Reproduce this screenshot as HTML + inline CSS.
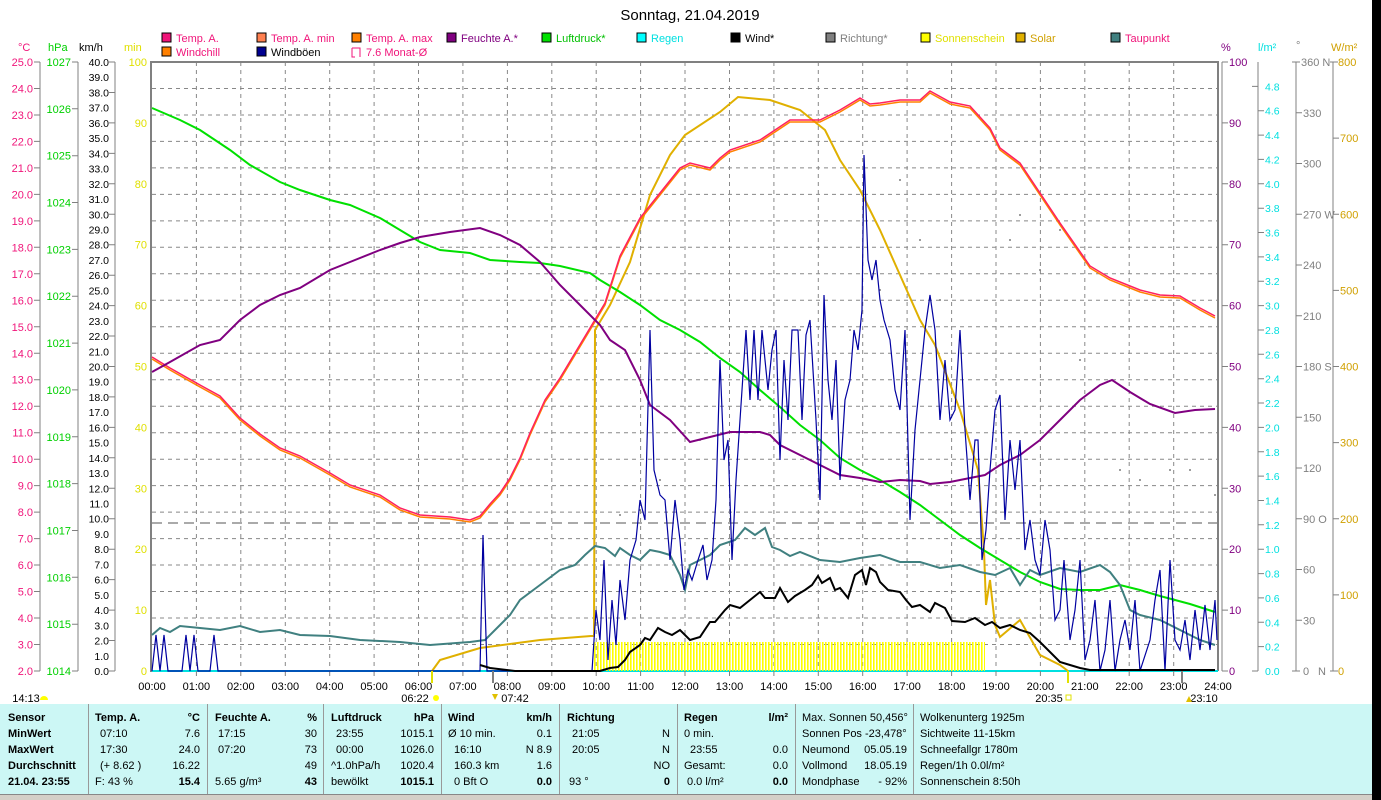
<!DOCTYPE html><html><head><meta charset="utf-8"><style>
body{margin:0;background:#fff;width:1381px;height:800px;overflow:hidden}
svg{display:block;font-family:"Liberation Sans",sans-serif;font-size:11px}
</style></head><body>
<svg width="1381" height="800" viewBox="0 0 1381 800">
<rect x="1372" y="0" width="9" height="800" fill="#000"/>
<text x="690" y="20" font-size="15" text-anchor="middle">Sonntag, 21.04.2019</text>
<!-- legend -->
<g font-size="11">
<rect x="162" y="33" width="9" height="9" fill="#f0157a" stroke="#000"/><text x="176" y="42" fill="#f0157a">Temp. A.</text>
<rect x="257" y="33" width="9" height="9" fill="#ff8050" stroke="#000"/><text x="271" y="42" fill="#f0157a">Temp. A. min</text>
<rect x="352" y="33" width="9" height="9" fill="#ff8000" stroke="#000"/><text x="366" y="42" fill="#f0157a">Temp. A. max</text>
<rect x="447" y="33" width="9" height="9" fill="#800080" stroke="#000"/><text x="461" y="42" fill="#800080">Feuchte A.*</text>
<rect x="542" y="33" width="9" height="9" fill="#00e000" stroke="#000"/><text x="556" y="42" fill="#00c000">Luftdruck*</text>
<rect x="637" y="33" width="9" height="9" fill="#00ffff" stroke="#000"/><text x="651" y="42" fill="#00e0e0">Regen</text>
<rect x="731" y="33" width="9" height="9" fill="#000" stroke="#000"/><text x="745" y="42">Wind*</text>
<rect x="826" y="33" width="9" height="9" fill="#808080" stroke="#000"/><text x="840" y="42" fill="#808080">Richtung*</text>
<rect x="921" y="33" width="9" height="9" fill="#ffff00" stroke="#000"/><text x="935" y="42" fill="#e0e000">Sonnenschein</text>
<rect x="1016" y="33" width="9" height="9" fill="#e0b000" stroke="#000"/><text x="1030" y="42" fill="#d0a000">Solar</text>
<rect x="1111" y="33" width="9" height="9" fill="#408080" stroke="#000"/><text x="1125" y="42" fill="#f0157a">Taupunkt</text>
<rect x="162" y="47" width="9" height="9" fill="#ff8000" stroke="#000"/><text x="176" y="56" fill="#f0157a">Windchill</text>
<rect x="257" y="47" width="9" height="9" fill="#000090" stroke="#000"/><text x="271" y="56">Windböen</text>
<path d="M352 48h8v9M352 48v9h3" fill="none" stroke="#f0157a"/><text x="366" y="56" fill="#f0157a">7.6 Monat-Ø</text>
</g>
<!-- axis headers -->
<g font-size="11">
<text x="18" y="51" fill="#f0157a">°C</text><text x="48" y="51" fill="#00d000">hPa</text><text x="79" y="51">km/h</text><text x="124" y="51" fill="#e0e000">min</text>
<text x="1221" y="51" fill="#800080">%</text><text x="1258" y="51" fill="#00e0e0">l/m²</text><text x="1296" y="49" fill="#808080">°</text><text x="1331" y="51" fill="#d0a000">W/m²</text>
</g>
<!-- grid -->
<g stroke="#888" stroke-dasharray="4,4" stroke-width="1">
<path d="M152 88.5H1218M152 115H1218M152 141.4H1218M152 167.9H1218M152 194.4H1218M152 220.9H1218M152 247.3H1218M152 273.8H1218M152 300.3H1218M152 326.8H1218M152 353.3H1218M152 379.7H1218M152 406.2H1218M152 432.7H1218M152 459.2H1218M152 485.6H1218M152 512.1H1218M152 538.6H1218M152 565H1218M152 591.5H1218M152 618H1218M152 644.5H1218"/>
<path d="M196.4 62V671M240.8 62V671M285.3 62V671M329.7 62V671M374.1 62V671M418.5 62V671M462.9 62V671M507.4 62V671M551.8 62V671M596.2 62V671M640.6 62V671M685 62V671M729.5 62V671M773.9 62V671M818.3 62V671M862.7 62V671M907.1 62V671M951.6 62V671M996 62V671M1040.4 62V671M1084.8 62V671M1129.2 62V671M1173.7 62V671"/>
</g>
<path d="M152 523H1218" stroke="#555" stroke-dasharray="10,6"/>
<!-- frame -->
<path d="M151 62H1219M151 61V672M1218 62V671" stroke="#808080" stroke-width="2" fill="none"/>
<path d="M1222 62V671" stroke="#808080" stroke-width="1"/>
<path d="M152 671H1218" stroke="#00e0e0" stroke-width="2"/>
<!-- left axis lines -->
<g stroke="#808080" fill="none">
<path d="M40 62V671M78 62V671M115 62V671"/>
<path d="M34 62h6M34 88.5h6M34 115h6M34 141.4h6M34 167.9h6M34 194.4h6M34 220.9h6M34 247.3h6M34 273.8h6M34 300.3h6M34 326.8h6M34 353.3h6M34 379.7h6M34 406.2h6M34 432.7h6M34 459.2h6M34 485.6h6M34 512.1h6M34 538.6h6M34 565h6M34 591.5h6M34 618h6M34 644.5h6M34 671h6"/>
<path d="M72 62h6M72 108.8h6M72 155.7h6M72 202.5h6M72 249.4h6M72 296.2h6M72 343.1h6M72 389.9h6M72 436.8h6M72 483.6h6M72 530.5h6M72 577.3h6M72 624.2h6M72 671h6"/>
<path d="M109 62h6M109 92.5h6M109 122.9h6M109 153.4h6M109 183.8h6M109 214.3h6M109 244.7h6M109 275.2h6M109 305.6h6M109 336h6M109 366.5h6M109 396.9h6M109 427.4h6M109 457.8h6M109 488.3h6M109 518.7h6M109 549.2h6M109 579.6h6M109 610.1h6M109 640.5h6M109 671h6"/>
<path d="M1258 62V671M1296 62V671M1333 62V671"/>
<path d="M1222 62h6M1222 122.9h6M1222 183.8h6M1222 244.7h6M1222 305.6h6M1222 366.5h6M1222 427.4h6M1222 488.3h6M1222 549.2h6M1222 610.1h6M1222 671h6"/>
<path d="M1252 86.4h6M1258 110.7h6M1258 135.1h6M1258 159.4h6M1258 183.8h6M1258 208.2h6M1258 232.5h6M1258 256.9h6M1258 281.2h6M1258 305.6h6M1258 330h6M1258 354.3h6M1258 378.7h6M1258 403h6M1258 427.4h6M1258 451.8h6M1258 476.1h6M1258 500.5h6M1258 524.8h6M1258 549.2h6M1258 573.6h6M1258 597.9h6M1258 622.3h6M1258 646.6h6M1252 671h6"/>
<path d="M1292 62h8M1296 112.75h6M1296 163.5h6M1296 214.25h6M1296 265h6M1296 315.75h6M1296 366.5h6M1296 417.25h6M1296 468h6M1296 518.75h6M1296 569.5h6M1296 620.25h6M1292 671h8"/>
<path d="M1330 62h8M1333 138.1h6M1333 214.3h6M1333 290.4h6M1333 366.5h6M1333 442.6h6M1333 518.75h6M1333 594.9h6M1330 671h8"/>
<path d="M196.4 671v5M240.8 671v5M285.3 671v5M329.7 671v5M374.1 671v5M418.5 671v5M462.9 671v5M507.4 671v5M551.8 671v5M596.2 671v5M640.6 671v5M685 671v5M729.5 671v5M773.9 671v5M818.3 671v5M862.7 671v5M907.1 671v5M951.6 671v5M996 671v5M1040.4 671v5M1084.8 671v5M1129.2 671v5M1173.7 671v5"/>
</g>
<!-- left labels -->
<g fill="#f0157a" text-anchor="end">
<text x="33" y="66">25.0</text><text x="33" y="92.5">24.0</text><text x="33" y="119">23.0</text><text x="33" y="145.4">22.0</text><text x="33" y="171.9">21.0</text><text x="33" y="198.4">20.0</text><text x="33" y="224.9">19.0</text><text x="33" y="251.3">18.0</text><text x="33" y="277.8">17.0</text><text x="33" y="304.3">16.0</text><text x="33" y="330.8">15.0</text><text x="33" y="357.3">14.0</text><text x="33" y="383.7">13.0</text><text x="33" y="410.2">12.0</text><text x="33" y="436.7">11.0</text><text x="33" y="463.2">10.0</text><text x="33" y="489.6">9.0</text><text x="33" y="516.1">8.0</text><text x="33" y="542.6">7.0</text><text x="33" y="569">6.0</text><text x="33" y="595.5">5.0</text><text x="33" y="622">4.0</text><text x="33" y="648.5">3.0</text><text x="33" y="675">2.0</text>
</g>
<g fill="#00d000" text-anchor="end">
<text x="71" y="66">1027</text><text x="71" y="112.8">1026</text><text x="71" y="159.7">1025</text><text x="71" y="206.5">1024</text><text x="71" y="253.4">1023</text><text x="71" y="300.2">1022</text><text x="71" y="347.1">1021</text><text x="71" y="393.9">1020</text><text x="71" y="440.8">1019</text><text x="71" y="487.6">1018</text><text x="71" y="534.5">1017</text><text x="71" y="581.3">1016</text><text x="71" y="628.2">1015</text><text x="71" y="675">1014</text>
</g>
<g fill="#000" text-anchor="end" font-size="10.5">
<text x="109" y="66">40.0</text><text x="109" y="81.2">39.0</text><text x="109" y="96.5">38.0</text><text x="109" y="111.7">37.0</text><text x="109" y="126.9">36.0</text><text x="109" y="142.1">35.0</text><text x="109" y="157.4">34.0</text><text x="109" y="172.6">33.0</text><text x="109" y="187.8">32.0</text><text x="109" y="203">31.0</text><text x="109" y="218.3">30.0</text><text x="109" y="233.5">29.0</text><text x="109" y="248.7">28.0</text><text x="109" y="263.9">27.0</text><text x="109" y="279.2">26.0</text><text x="109" y="294.4">25.0</text><text x="109" y="309.6">24.0</text><text x="109" y="324.8">23.0</text><text x="109" y="340">22.0</text><text x="109" y="355.3">21.0</text><text x="109" y="370.5">20.0</text><text x="109" y="385.7">19.0</text><text x="109" y="400.9">18.0</text><text x="109" y="416.2">17.0</text><text x="109" y="431.4">16.0</text><text x="109" y="446.6">15.0</text><text x="109" y="461.8">14.0</text><text x="109" y="477.1">13.0</text><text x="109" y="492.3">12.0</text><text x="109" y="507.5">11.0</text><text x="109" y="522.7">10.0</text><text x="109" y="538">9.0</text><text x="109" y="553.2">8.0</text><text x="109" y="568.4">7.0</text><text x="109" y="583.6">6.0</text><text x="109" y="598.9">5.0</text><text x="109" y="614.1">4.0</text><text x="109" y="629.3">3.0</text><text x="109" y="644.5">2.0</text><text x="109" y="659.8">1.0</text><text x="109" y="675">0.0</text>
</g>
<g fill="#e0e000" text-anchor="end">
<text x="147" y="66">100</text><text x="147" y="126.9">90</text><text x="147" y="187.8">80</text><text x="147" y="248.7">70</text><text x="147" y="309.6">60</text><text x="147" y="370.5">50</text><text x="147" y="431.4">40</text><text x="147" y="492.3">30</text><text x="147" y="553.2">20</text><text x="147" y="614.1">10</text><text x="147" y="675">0</text>
</g>
<!-- right labels -->
<g fill="#800080">
<text x="1229" y="66">100</text><text x="1229" y="126.9">90</text><text x="1229" y="187.8">80</text><text x="1229" y="248.7">70</text><text x="1229" y="309.6">60</text><text x="1229" y="370.5">50</text><text x="1229" y="431.4">40</text><text x="1229" y="492.3">30</text><text x="1229" y="553.2">20</text><text x="1229" y="614.1">10</text><text x="1229" y="675">0</text>
</g>
<g fill="#00e0e0" font-size="10.5">
<text x="1265" y="90.4">4.8</text><text x="1265" y="114.7">4.6</text><text x="1265" y="139.1">4.4</text><text x="1265" y="163.4">4.2</text><text x="1265" y="187.8">4.0</text><text x="1265" y="212.2">3.8</text><text x="1265" y="236.5">3.6</text><text x="1265" y="260.9">3.4</text><text x="1265" y="285.2">3.2</text><text x="1265" y="309.6">3.0</text><text x="1265" y="334">2.8</text><text x="1265" y="358.3">2.6</text><text x="1265" y="382.7">2.4</text><text x="1265" y="407">2.2</text><text x="1265" y="431.4">2.0</text><text x="1265" y="455.8">1.8</text><text x="1265" y="480.1">1.6</text><text x="1265" y="504.5">1.4</text><text x="1265" y="528.8">1.2</text><text x="1265" y="553.2">1.0</text><text x="1265" y="577.6">0.8</text><text x="1265" y="601.9">0.6</text><text x="1265" y="626.3">0.4</text><text x="1265" y="650.6">0.2</text><text x="1265" y="675">0.0</text>
</g>
<g fill="#808080">
<text x="1301" y="66">360 N</text><text x="1303" y="116.8">330</text><text x="1303" y="167.5">300</text><text x="1303" y="218.3">270 W</text><text x="1303" y="269">240</text><text x="1303" y="319.8">210</text><text x="1303" y="370.5">180 S</text><text x="1303" y="421.3">150</text><text x="1303" y="472">120</text><text x="1303" y="522.8">90 O</text><text x="1303" y="573.5">60</text><text x="1303" y="624.3">30</text><text x="1303" y="675">0</text><text x="1318" y="675">N</text>
</g>
<g fill="#d0a000">
<text x="1338" y="66">800</text><text x="1340" y="142.1">700</text><text x="1340" y="218.3">600</text><text x="1340" y="294.4">500</text><text x="1340" y="370.5">400</text><text x="1340" y="446.6">300</text><text x="1340" y="522.8">200</text><text x="1340" y="598.9">100</text><text x="1338" y="675">0</text>
</g>
<!-- sunshine bars -->
<defs><pattern id="sb" x="594" y="0" width="3" height="10" patternUnits="userSpaceOnUse"><rect width="1.6" height="10" fill="#ffff00"/></pattern></defs>
<rect x="594" y="642" width="391" height="29" fill="url(#sb)"/>
<!-- dots (direction) -->
<g fill="#808080">
<circle cx="640" cy="510" r="1"/><circle cx="700" cy="440" r="1"/><circle cx="760" cy="400" r="1"/><circle cx="800" cy="330" r="1"/><circle cx="820" cy="450" r="1"/><circle cx="850" cy="330" r="1"/><circle cx="880" cy="290" r="1"/><circle cx="900" cy="180" r="1"/><circle cx="920" cy="240" r="1"/><circle cx="940" cy="300" r="1"/><circle cx="1010" cy="240" r="1"/><circle cx="1020" cy="215" r="1"/><circle cx="1040" cy="270" r="1"/><circle cx="1060" cy="230" r="1"/><circle cx="1080" cy="360" r="1"/><circle cx="1120" cy="470" r="1"/><circle cx="1140" cy="480" r="1"/><circle cx="1170" cy="470" r="1"/><circle cx="1190" cy="470" r="1"/><circle cx="1215" cy="495" r="1"/><circle cx="660" cy="480" r="1"/><circle cx="730" cy="510" r="1"/><circle cx="620" cy="515" r="1"/>
</g>
<!-- solar -->
<polyline fill="none" stroke="#e0b000" stroke-width="2" points="432,671 440,660 480,648 540,640 591,636 594,636 595,330 610,305 630,262 650,195 670,155 685,135 720,112 738,97 770,100 800,110 825,130 840,160 860,190 880,230 900,275 920,320 935,345 960,410 978,470 984,550 986,605 990,580 995,625 1000,637 1020,620 1040,655 1060,665 1068,671"/>
<!-- pressure -->
<polyline fill="none" stroke="#00e000" stroke-width="2" points="152,108 180,120 200,130 230,150 250,165 280,182 300,190 330,200 350,205 380,218 400,230 420,242 440,250 470,253 490,260 520,262 540,263 560,266 590,273 600,280 620,292 640,305 660,320 680,330 700,342 720,358 740,372 760,390 780,407 800,425 820,440 840,458 860,470 880,480 900,492 920,505 940,520 960,535 980,548 1000,560 1020,572 1040,582 1060,589 1080,590 1100,590 1120,585 1140,590 1160,596 1190,604 1215,612"/>
<!-- dew point -->
<polyline fill="none" stroke="#408080" stroke-width="2" points="152,635 160,628 170,632 180,626 200,628 220,630 240,626 260,632 280,630 300,635 330,636 360,640 400,642 430,645 470,642 485,640 500,625 510,615 520,600 540,585 560,570 575,565 585,555 595,546 605,548 615,556 620,548 630,555 640,560 650,550 660,552 670,555 680,575 685,590 690,565 700,560 710,555 720,545 735,540 745,528 755,535 765,528 772,547 780,550 790,556 800,552 820,560 840,562 860,558 880,555 900,562 920,562 940,568 960,565 980,572 995,575 1010,568 1020,585 1030,570 1040,575 1060,568 1080,572 1100,565 1110,572 1120,585 1130,610 1140,615 1160,620 1180,630 1200,640 1215,645"/>
<!-- temp -->
<polyline fill="none" stroke="#ff8000" stroke-width="1.5" points="152,359 170,370 200,387 220,398 240,420 260,436 280,450 300,458 330,475 350,487 380,497 400,510 420,517 450,519 470,522 480,518 490,506 500,495 510,480 520,460 530,435 545,402 560,380 575,355 590,330 605,305 620,258 640,220 660,195 680,170 690,165 710,170 720,160 730,152 760,142 775,132 790,122 820,122 840,112 860,100 870,106 880,105 900,102 920,102 930,93 950,104 970,108 990,130 1000,150 1020,165 1040,195 1060,225 1090,268 1110,280 1140,292 1160,297 1180,298 1200,310 1215,318"/>
<polyline fill="none" stroke="#ff2060" stroke-width="1.5" points="152,357 170,368 200,385 220,396 240,418 260,434 280,448 300,456 330,473 350,485 380,495 400,508 420,515 450,517 470,520 480,516 490,504 500,493 510,478 520,458 530,433 545,400 560,378 575,353 590,328 605,303 620,256 640,218 660,193 680,168 690,163 710,168 720,158 730,150 760,140 775,130 790,120 820,120 840,110 860,98 870,104 880,103 900,100 920,100 930,91 950,102 970,106 990,128 1000,148 1020,163 1040,193 1060,223 1090,266 1110,278 1140,290 1160,295 1180,296 1200,308 1215,316"/>
<!-- humidity -->
<polyline fill="none" stroke="#800080" stroke-width="2" points="152,372 170,362 200,345 220,340 240,320 260,305 280,295 300,288 330,270 350,262 380,250 400,243 420,237 450,232 480,228 500,235 520,245 540,262 560,285 580,305 600,325 610,340 625,350 640,380 650,405 670,420 690,442 710,437 730,432 760,432 770,435 780,445 800,455 820,465 840,475 860,478 880,482 900,480 920,481 930,484 950,482 970,478 985,475 1000,465 1020,455 1040,440 1060,420 1080,400 1100,385 1112,380 1130,392 1150,404 1175,413 1195,410 1215,409"/>
<!-- gusts -->
<polyline fill="none" stroke="#0000a0" stroke-width="1.2" points="152,671 156,635 160,671 164,635 168,671 182,671 186,635 190,671 194,635 198,671 210,671 214,635 218,671 480,671 483,535 487,671 592,671 596,610 600,640 604,560 608,660 612,600 616,645 620,580 625,620 630,560 636,540 640,500 645,520 650,330 654,470 660,495 665,500 670,560 675,500 680,540 684,590 688,570 692,580 698,560 703,545 707,580 712,560 716,500 720,360 724,460 728,440 732,560 736,480 742,390 746,330 750,400 754,330 758,400 762,330 768,390 772,350 776,330 780,460 784,360 788,420 792,330 798,330 802,420 806,335 810,320 816,420 820,500 824,295 828,380 832,420 836,360 840,480 845,400 850,380 854,330 858,350 862,310 864,155 868,260 872,280 876,260 880,300 884,320 890,340 895,390 900,410 905,330 910,520 915,430 920,380 925,330 930,295 935,330 940,420 945,360 950,420 955,410 960,330 965,430 970,500 975,440 978,440 982,560 986,530 990,470 995,410 1000,395 1005,520 1010,440 1015,490 1020,440 1025,550 1030,520 1035,560 1040,575 1045,520 1050,550 1055,620 1060,610 1064,560 1070,640 1075,610 1080,560 1085,660 1090,640 1095,600 1100,671 1105,650 1110,600 1115,671 1120,640 1125,620 1130,650 1135,600 1140,671 1150,640 1155,600 1160,570 1165,671 1170,560 1175,640 1180,650 1185,620 1190,660 1195,610 1200,650 1205,605 1210,650 1215,600 1217,640"/>
<!-- wind -->
<polyline fill="none" stroke="#000" stroke-width="2" points="480,665 490,668 515,671 600,671 610,668 618,667 625,660 630,652 640,645 645,638 650,640 658,628 665,632 672,635 680,630 690,640 700,637 710,622 715,622 725,610 730,605 740,608 750,600 760,592 765,598 775,598 780,588 788,602 795,596 805,590 812,585 818,576 822,583 830,578 835,590 840,588 848,598 855,575 862,570 866,585 870,568 876,572 880,582 888,590 900,592 906,600 912,607 920,605 930,612 935,603 945,608 952,621 965,622 975,618 985,625 992,622 1000,628 1010,625 1020,630 1030,633 1040,642 1050,652 1060,662 1070,665 1080,668 1090,670 1215,670"/>
<!-- sun markers -->
<path d="M432 671V683M1068 671V683" stroke="#e0e000" stroke-width="2"/>
<path d="M493 671V683M1182 671V683" stroke="#808080" stroke-width="2"/>
<!-- time labels -->
<g font-size="11" text-anchor="middle">
<text x="152" y="690">00:00</text><text x="196.4" y="690">01:00</text><text x="240.8" y="690">02:00</text><text x="285.3" y="690">03:00</text><text x="329.7" y="690">04:00</text><text x="374.1" y="690">05:00</text><text x="418.5" y="690">06:00</text><text x="462.9" y="690">07:00</text><text x="507.4" y="690">08:00</text><text x="551.8" y="690">09:00</text><text x="596.2" y="690">10:00</text><text x="640.6" y="690">11:00</text><text x="685" y="690">12:00</text><text x="729.5" y="690">13:00</text><text x="773.9" y="690">14:00</text><text x="818.3" y="690">15:00</text><text x="862.7" y="690">16:00</text><text x="907.1" y="690">17:00</text><text x="951.6" y="690">18:00</text><text x="996" y="690">19:00</text><text x="1040.4" y="690">20:00</text><text x="1084.8" y="690">21:00</text><text x="1129.2" y="690">22:00</text><text x="1173.7" y="690">23:00</text><text x="1218" y="690">24:00</text>
<text x="415" y="702">06:22</text><text x="1049" y="702">20:35</text><text x="26" y="702">14:13</text>
<text x="515" y="702">07:42</text><text x="1204" y="702">23:10</text>
</g>
<circle cx="436" cy="698" r="3" fill="#ffff00"/><rect x="1066" y="695" width="5" height="5" fill="none" stroke="#e0e000"/>
<path d="M40 700a4 4 0 0 1 8 0z" fill="#ffff00"/>
<path d="M492 694l3 6l3-6z" fill="#e0c000"/><path d="M1186 702l3-6l3 6z" fill="#e0c000"/>
<!-- table -->
<rect x="0" y="704" width="1372" height="90" fill="#ccf7f5"/>
<rect x="0" y="794" width="1372" height="6" fill="#d4d0c8"/>
<path d="M0 794.5H1372" stroke="#888"/>
<g stroke="#999"><path d="M88.5 704V794M207.5 704V794M323.5 704V794M441.5 704V794M559.5 704V794M677.5 704V794M795.5 704V794M913.5 704V794"/></g>
<g font-size="11">
<g font-weight="bold"><text x="8" y="721">Sensor</text><text x="8" y="737">MinWert</text><text x="8" y="753">MaxWert</text><text x="8" y="769">Durchschnitt</text><text x="8" y="785">21.04. 23:55</text>
<text x="95" y="721">Temp. A.</text><text x="200" y="721" text-anchor="end">°C</text>
<text x="215" y="721">Feuchte A.</text><text x="317" y="721" text-anchor="end">%</text>
<text x="331" y="721">Luftdruck</text><text x="434" y="721" text-anchor="end">hPa</text>
<text x="448" y="721">Wind</text><text x="552" y="721" text-anchor="end">km/h</text>
<text x="567" y="721">Richtung</text>
<text x="684" y="721">Regen</text><text x="788" y="721" text-anchor="end">l/m²</text>
<text x="200" y="785" text-anchor="end">15.4</text><text x="317" y="785" text-anchor="end">43</text><text x="434" y="785" text-anchor="end">1015.1</text><text x="552" y="785" text-anchor="end">0.0</text><text x="670" y="785" text-anchor="end">0</text><text x="788" y="785" text-anchor="end">0.0</text></g>
<text x="100" y="737">07:10</text><text x="200" y="737" text-anchor="end">7.6</text>
<text x="100" y="753">17:30</text><text x="200" y="753" text-anchor="end">24.0</text>
<text x="100" y="769">(+ 8.62 )</text><text x="200" y="769" text-anchor="end">16.22</text>
<text x="95" y="785">F: 43 %</text>
<text x="218" y="737">17:15</text><text x="317" y="737" text-anchor="end">30</text>
<text x="218" y="753">07:20</text><text x="317" y="753" text-anchor="end">73</text>
<text x="317" y="769" text-anchor="end">49</text><text x="215" y="785">5.65 g/m³</text>
<text x="336" y="737">23:55</text><text x="434" y="737" text-anchor="end">1015.1</text>
<text x="336" y="753">00:00</text><text x="434" y="753" text-anchor="end">1026.0</text>
<text x="331" y="769">^1.0hPa/h</text><text x="434" y="769" text-anchor="end">1020.4</text>
<text x="331" y="785">bewölkt</text>
<text x="448" y="737">Ø 10 min.</text><text x="552" y="737" text-anchor="end">0.1</text>
<text x="454" y="753">16:10</text><text x="552" y="753" text-anchor="end">N 8.9</text>
<text x="454" y="769">160.3 km</text><text x="552" y="769" text-anchor="end">1.6</text>
<text x="454" y="785">0 Bft O</text>
<text x="572" y="737">21:05</text><text x="670" y="737" text-anchor="end">N</text>
<text x="572" y="753">20:05</text><text x="670" y="753" text-anchor="end">N</text>
<text x="670" y="769" text-anchor="end">NO</text><text x="569" y="785">93 °</text>
<text x="684" y="737">0 min.</text>
<text x="690" y="753">23:55</text><text x="788" y="753" text-anchor="end">0.0</text>
<text x="684" y="769">Gesamt:</text><text x="788" y="769" text-anchor="end">0.0</text>
<text x="687" y="785">0.0 l/m²</text>
<text x="802" y="721">Max. Sonnen 50,456°</text>
<text x="802" y="737">Sonnen Pos  -23,478°</text>
<text x="802" y="753">Neumond</text><text x="907" y="753" text-anchor="end">05.05.19</text>
<text x="802" y="769">Vollmond</text><text x="907" y="769" text-anchor="end">18.05.19</text>
<text x="802" y="785">Mondphase</text><text x="907" y="785" text-anchor="end">- 92%</text>
<text x="920" y="721">Wolkenunterg 1925m</text>
<text x="920" y="737">Sichtweite   11-15km</text>
<text x="920" y="753">Schneefallgr   1780m</text>
<text x="920" y="769">Regen/1h    0.0l/m²</text>
<text x="920" y="785">Sonnenschein  8:50h</text>
</g>
</svg>
</body></html>
